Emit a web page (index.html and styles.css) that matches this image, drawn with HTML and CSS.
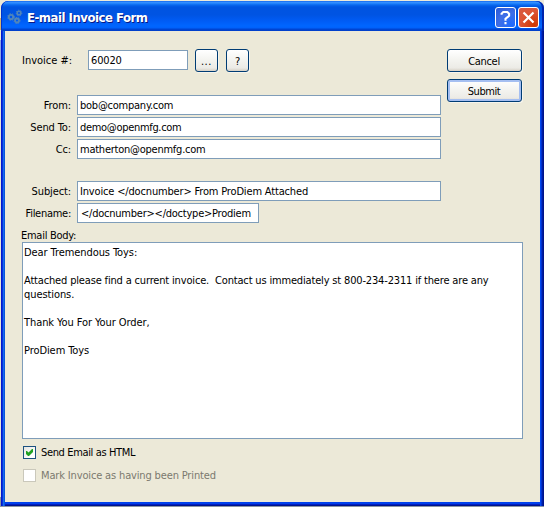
FILE: index.html
```
<!DOCTYPE html>
<html lang="en">
<head>
<meta charset="utf-8">
<title>E-mail Invoice Form</title>
<link rel="stylesheet" href="styles.css">
</head>
<body>
<div class="window">
  <header class="titlebar">
    <svg class="app-icon" width="16" height="16" viewBox="0 0 16 16" fill="none" stroke="#5286b9">
      <circle cx="4" cy="8" r="2.2" stroke-width="1.8"/>
      <circle cx="4" cy="8" r="3.3" stroke-width="1" stroke-dasharray="1.4 1.3"/>
      <circle cx="12" cy="4" r="1.8" stroke-width="1.6"/>
      <circle cx="12" cy="4" r="2.8" stroke-width="1" stroke-dasharray="1.2 1.2"/>
      <circle cx="10" cy="11.5" r="2" stroke-width="1.8"/>
      <circle cx="10" cy="11.5" r="3" stroke-width="1" stroke-dasharray="1.3 1.2"/>
    </svg>
    <h1 class="title">E-mail Invoice Form</h1>
    <span class="caption-button help"><svg width="19" height="19" viewBox="0 0 19 19" fill="none" stroke="#fff" stroke-width="2.1"><path d="M5.6 6.7V5.6L7.3 4h4l1.8 1.6v2.2L9.5 10.8v2"/><path d="M9.5 14v2.2"/></svg></span>
    <span class="caption-button close"><svg width="19" height="19" viewBox="0 0 19 19" stroke="#fff" stroke-width="2.2"><path d="M4.5 4.5l10 10M14.5 4.5l-10 10"/></svg></span>
  </header>
  <main class="client">
    <div class="top">
      <div class="fields">
        <div class="invoice-row">
          <span class="invoice-label">Invoice #:</span>
          <div class="input invoice-input">60020</div>
          <div class="button small dots">...</div>
          <div class="button small">?</div>
        </div>
        <div class="row"><span class="label">From:</span><div class="input address">bob@company.com</div></div>
        <div class="row"><span class="label">Send To:</span><div class="input address-tight">demo@openmfg.com</div></div>
        <div class="row"><span class="label">Cc:</span><div class="input address">matherton@openmfg.com</div></div>
        <div class="row subject"><span class="label">Subject:</span><div class="input subject-value">Invoice &lt;/docnumber&gt; From ProDiem Attached</div></div>
        <div class="row"><span class="label label-tight">Filename:</span><div class="input filename">&lt;/docnumber&gt;&lt;/doctype&gt;Prodiem</div></div>
      </div>
      <div class="actions">
        <div class="button">Cancel</div>
        <div class="button default">Submit</div>
      </div>
    </div>
    <div class="body-label">Email Body:</div>
    <div class="email-body"><p>Dear Tremendous Toys:</p><p class="message gap">Attached please find a current invoice.&nbsp; Contact us immediately st 800-234-2311 if there are any</p><p>questions.</p><p class="gap">Thank You For Your Order,</p><p class="gap">ProDiem Toys</p></div>
    <div class="check-row"><span class="checkbox"><svg width="11" height="11" viewBox="0 0 11 11" fill="#21a121"><path d="M2 4v3l2 2h1l4-4V2H8L4.5 5.5 3 4z"/></svg></span><span class="html-label">Send Email as HTML</span></div>
    <div class="check-row disabled"><span class="checkbox"></span><span class="printed-label">Mark Invoice as having been Printed</span></div>
  </main>
</div>
</body>
</html>
```
FILE: styles.css
```
* { box-sizing: border-box; }
body {
  margin: 0;
  width: 544px;
  height: 507px;
  overflow: hidden;
  padding: 1px 0 1px 1px;
  background: linear-gradient(#ece9d8 0 18px, #d9b36d 18px 30px, #ece9d8 30px 40px, #8ca5e7 40px 70px, #e5e3da 70px 497px, #8b96a5 497px);
  font: 11px/14px "DejaVu Sans Condensed", "DejaVu Sans", sans-serif;
  font-stretch: condensed;
  color: #000;
  white-space: nowrap;
}
.window {
  width: 543px;
  height: 505px;
  border-radius: 7px 7px 0 0;
  background: linear-gradient(90deg, #0019cf 0 1px, #0831d9 1px 2px, #166aee 2px 3px, #0855dd 3px 4px, #0048f0 4px 540px, #0030d0 540px 541px, #001da0 541px 542px, #00138c 542px);
  overflow: hidden;
}
.titlebar {
  display: flex;
  align-items: center;
  height: 30px;
  padding: 2px 5px 0 6px;
  border-radius: 7px 7px 0 0;
  background: linear-gradient(#0058e8 0, #3c91ff 1px, #298bff 2px, #0868ee 4px, #0054e0 6px, #0054e3 14px, #005cf5 20px, #0066ff 25px, #0061fa 27px, #0046d4 28px, #003dc9 30px);
  box-shadow: inset 1px 0 #0034cc, inset -2px 0 #0024ad;
}
.app-icon { margin-right: 4px; }
.title {
  flex: 1;
  margin: 2px 0 0;
  font: bold 13px/18px "DejaVu Sans Condensed", sans-serif;
  letter-spacing: -0.49px;
  color: #fff;
  text-shadow: 1px 1px #0a1883;
}
.caption-button {
  display: flex;
  width: 21px;
  height: 21px;
  margin-left: 2px;
  border: 1px solid #fff;
  border-radius: 3px;
}
.help { background: radial-gradient(circle at 80% 90%, #1f6bff, #3f6ee6 55%, #2757d8); }
.close { background: radial-gradient(circle at 80% 90%, #ce3600, #dd5535 60%, #d65b43); }
.client {
  height: 471px;
  margin: 0 4px 4px 4px;
  padding: 18px 17px 0;
  background: #ece9d8;
  box-shadow: 0 2px #0040ec, 0 3px #001fc0, 0 4px #00138c;
}
.top { display: flex; justify-content: space-between; }
.invoice-row { display: flex; align-items: flex-start; height: 46px; }
.invoice-label { width: 66px; padding-top: 5px; }
.input {
  width: 364px;
  height: 20px;
  padding: 3px 2px 0;
  border: 1px solid #7f9db9;
  background: #fff;
}
.invoice-input { width: 100px; margin: 1px 7px 0 0; letter-spacing: -.15px; }
.row { display: flex; height: 20px; margin-bottom: 2px; }
.label { width: 49px; margin-right: 6px; padding-top: 4px; display: flex; justify-content: flex-end; letter-spacing: -.12px; }
.label-tight { letter-spacing: -.27px; }
.address { letter-spacing: -.24px; }
.address-tight { letter-spacing: -.31px; }
.subject { margin-top: 22px; }
.subject-value { letter-spacing: -.165px; }
.filename { width: 182px; padding-left: 3px; letter-spacing: -.23px; }
.actions { display: flex; flex-direction: column; gap: 7px; margin-right: 1px; }
.button {
  width: 75px;
  height: 23px;
  padding-right: 1px;
  border: 1px solid #003c74;
  border-radius: 3px;
  background: linear-gradient(#fff, #f3f3ef 50%, #ecebe6 85%, #d6d0c5);
  line-height: 23px;
  text-align: center;
  letter-spacing: -.3px;
  box-shadow: 1px 1px #f7f5ed;
}
.small { width: 23px; margin-right: 8px; padding: 0; }
.dots { letter-spacing: .6px; }
.default { box-shadow: inset 0 0 0 2px #a5bff1, inset 0 -2px #6982ee, 1px 1px #f7f5ed; letter-spacing: -.45px; }
.body-label { height: 14px; margin: 3px 0 0 -1px; padding-top: 1px; letter-spacing: -.27px; }
.email-body {
  width: 501px;
  height: 197px;
  padding: 3px 1px 0;
  border: 1px solid #7f9db9;
  background: #fff;
}
.email-body p { margin: 0; letter-spacing: -.08px; }
.email-body .message { letter-spacing: -.165px; }
.email-body .gap { margin-top: 14px; }
.check-row { display: flex; align-items: center; height: 13px; margin: 7px 0 10px 1px; gap: 5px; }
.checkbox { width: 13px; height: 13px; border: 1px solid #1c5180; background: linear-gradient(135deg, #e5e5e0, #fff 75%); display: flex; }
.html-label { padding-top: 1px; letter-spacing: -.36px; }
.printed-label { padding-top: 1px; letter-spacing: -.15px; }
.disabled { color: #7b796f; }
.disabled .checkbox { border-color: #cac8bb; background: #fff; }
```
